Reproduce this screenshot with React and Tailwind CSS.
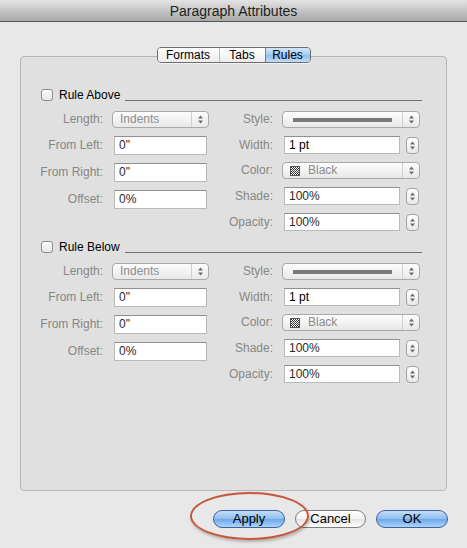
import React from "react";

const UpDown = () => (
  <svg width="7" height="11" viewBox="0 0 7 11">
    <path d="M3.5 1.5 L6 4.5 H1 Z" fill="#6a6a6a" />
    <path d="M3.5 9.5 L6 6.5 H1 Z" fill="#6a6a6a" />
  </svg>
);

const Checker = () => (
  <svg width="10" height="10" viewBox="0 0 10 10">
    <defs>
      <pattern id="chk" width="2" height="2" patternUnits="userSpaceOnUse">
        <rect width="2" height="2" fill="#fff" />
        <rect width="1" height="1" fill="#333" />
        <rect x="1" y="1" width="1" height="1" fill="#333" />
      </pattern>
    </defs>
    <rect x="0.5" y="0.5" width="9" height="9" fill="url(#chk)" stroke="#555" />
  </svg>
);

function Select({ className, children }) {
  return (
    <div
      className={
        "flex h-[17px] items-center rounded-[4px] border border-[#a9a9a9] bg-linear-to-b from-[#fdfdfd] to-[#e8e8e8] " +
        className
      }
    >
      <div className="flex flex-1 items-center pl-[7px] text-[12px] leading-[15px] text-[#8c8c8c]">
        {children}
      </div>
      <div className="flex h-full w-[17px] items-center justify-center border-l border-[#d0d0d0]">
        <UpDown />
      </div>
    </div>
  );
}

function Field({ className, value }) {
  return (
    <div
      className={
        "flex items-center border border-[#b9b9b9] border-t-[#8f8f8f] bg-white pl-[4px] text-[12px] leading-[15px] text-[#2a2a2a] " +
        className
      }
    >
      {value}
    </div>
  );
}

const Stepper = () => (
  <div className="ml-[6px] flex h-[17px] w-[13px] items-center justify-center rounded-[4px] border border-[#a3a3a3] bg-linear-to-b from-white to-[#e9e9e9]">
    <UpDown />
  </div>
);

const Label = ({ className, children }) => (
  <span className={"text-right text-[12px] leading-[15px] text-[#878787] " + className}>
    {children}
  </span>
);

function RuleSection({ title }) {
  return (
    <div>
      <div className="flex h-[14px] items-start pl-[20px] pr-[24px]">
        <div className="mt-[1px] h-[12px] w-[12px] rounded-[3px] border border-[#8c8c8c] bg-linear-to-b from-white to-[#e4e4e4]" />
        <span className="ml-[6px] text-[12px] leading-[14px] text-black">{title}</span>
        <div className="ml-[5px] mt-[12px] h-px flex-1 bg-[#707070]" />
      </div>

      <div className="mt-[9px] flex">
        {/* left column */}
        <div className="flex w-[199px] flex-col gap-[8px]">
          <div className="flex items-center">
            <Label className="w-[82px]">Length:</Label>
            <Select className="ml-[9px] w-[97px]">Indents</Select>
          </div>
          <div className="flex items-center">
            <Label className="w-[82px]">From Left:</Label>
            <Field className="ml-[11px] h-[19px] w-[93px]" value={'0"'} />
          </div>
          <div className="flex items-center">
            <Label className="w-[82px]">From Right:</Label>
            <Field className="ml-[11px] h-[19px] w-[93px]" value={'0"'} />
          </div>
          <div className="flex items-center">
            <Label className="w-[82px]">Offset:</Label>
            <Field className="ml-[11px] h-[19px] w-[93px]" value="0%" />
          </div>
        </div>

        {/* right column */}
        <div className="flex flex-col gap-[8px]">
          <div className="flex items-center">
            <Label className="w-[53px]">Style:</Label>
            <Select className="ml-[9px] w-[138px]">
              <div className="ml-[3px] h-[4px] w-[99px] bg-[#7a7a7a]" />
            </Select>
          </div>
          <div className="flex items-center">
            <Label className="w-[53px]">Width:</Label>
            <Field className="ml-[11px] h-[18px] w-[116px] text-black" value="1 pt" />
            <Stepper />
          </div>
          <div className="flex items-center">
            <Label className="w-[53px]">Color:</Label>
            <Select className="ml-[9px] w-[138px]">
              <Checker />
              <span className="ml-[8px]">Black</span>
            </Select>
          </div>
          <div className="flex items-center">
            <Label className="w-[53px]">Shade:</Label>
            <Field className="ml-[11px] h-[18px] w-[116px]" value="100%" />
            <Stepper />
          </div>
          <div className="flex items-center">
            <Label className="w-[53px]">Opacity:</Label>
            <Field className="ml-[11px] h-[18px] w-[116px]" value="100%" />
            <Stepper />
          </div>
        </div>
      </div>
    </div>
  );
}

export default function App() {
  return (
    <div className="relative h-[548px] w-[467px] overflow-hidden bg-[#e8e8e8] font-['Liberation_Sans',Arial,sans-serif]">
      {/* title bar */}
      <div className="flex h-[22px] items-center justify-center border-b border-[#555] bg-linear-to-b from-[#e4e4e4] to-[#a8a8a8] text-[14px] leading-[16px] text-[#1e1e1e]">
        Paragraph Attributes
      </div>

      {/* tabs */}
      <div className="relative z-10 mt-[25px] flex justify-center">
        <div className="flex h-[16px] overflow-hidden rounded-[4px] border border-[#6e6e6e] text-[12px] leading-[14px] text-black shadow-[0_1px_0_rgba(255,255,255,0.6)]">
          <div className="flex w-[61px] items-center justify-center bg-linear-to-b from-white to-[#ececec]">Formats</div>
          <div className="flex w-[46px] items-center justify-center border-l border-[#b9b9b9] bg-linear-to-b from-white to-[#ececec]">Tabs</div>
          <div className="flex w-[45px] items-center justify-center border-l border-[#5f86bd] bg-[linear-gradient(#d2e6fb,#a2c9f3_50%,#8dbcf0_51%,#c2defb)]">Rules</div>
        </div>
      </div>

      {/* group box */}
      <div className="mx-[20px] -mt-[7px] h-[435px] w-[427px] rounded-[4px] border border-[#b7b7b7] bg-[#e0e0e0] pt-[31px]">
        <RuleSection title="Rule Above" />
        <div className="mt-[9px]">
          <RuleSection title="Rule Below" />
        </div>
      </div>

      {/* buttons */}
      <div className="mt-[19px] flex justify-end gap-[10px] pr-[19px] text-[13px] leading-[16px] text-black">
        <div className="flex h-[18px] w-[72px] items-center justify-center rounded-full border border-[#3f629a] bg-[linear-gradient(#c4def8,#8fbdef_50%,#6ba7e9_51%,#acd4fa)]">
          Apply
        </div>
        <div className="flex h-[18px] w-[71px] items-center justify-center rounded-full border border-[#7d7d7d] bg-[linear-gradient(#ffffff,#f3f3f3_50%,#e4e4e4_51%,#ffffff)]">
          Cancel
        </div>
        <div className="flex h-[18px] w-[72px] items-center justify-center rounded-full border border-[#3f629a] bg-[linear-gradient(#c4def8,#8fbdef_50%,#6ba7e9_51%,#acd4fa)]">
          OK
        </div>
      </div>

      {/* annotation ellipse */}
      <div className="pointer-events-none absolute left-[190px] top-[492px] h-[48px] w-[119px] rounded-[50%] border-2 border-[#c4573c] shadow-[1px_2px_3px_rgba(0,0,0,0.25)]" />
    </div>
  );
}
